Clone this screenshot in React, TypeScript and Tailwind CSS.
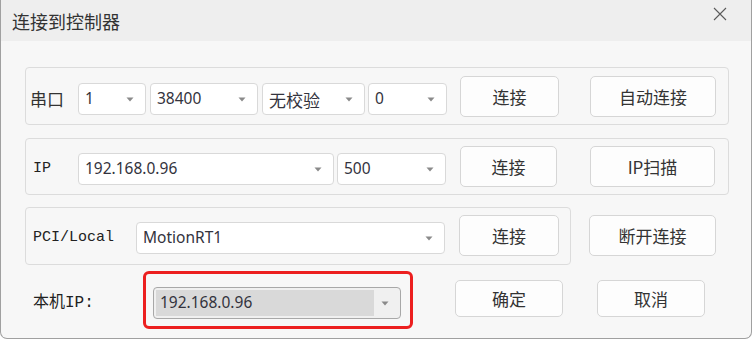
import React from "react";

const CJK = '"Noto Sans CJK SC", sans-serif';
const SANS = '"Noto Sans", "Noto Sans CJK SC", sans-serif';
const MONO = '"Liberation Mono", "Noto Sans CJK SC", monospace';

function Arrow() {
  return (
    <svg width="8" height="5" viewBox="0 0 8 5" className="shrink-0">
      <path d="M0.5 0.5 L7.5 0.5 L4 4.5 Z" fill="#8a8a8a" />
    </svg>
  );
}

function Combo({ text, w, cjk = false }: { text: string; w: string; cjk?: boolean }) {
  return (
    <div
      className={`${w} h-[32px] shrink-0 rounded-[4px] border border-[#d9d9d9] bg-white flex items-center justify-between pl-[6px] pr-[11px] text-[#33333d]`}
      style={{ fontFamily: cjk ? CJK : SANS }}
    >
      <span className={cjk ? "text-[17px] leading-none" : "text-[15.5px] leading-none"}>{text}</span>
      <Arrow />
    </div>
  );
}

function Btn({ text, w, h = "h-[41px]" }: { text: string; w: string; h?: string }) {
  return (
    <div
      className={`${w} ${h} shrink-0 rounded-[5px] border border-[#d6d6d6] bg-[#fdfdfd] flex items-center justify-center text-[17px] text-[#333333]`}
      style={{ fontFamily: CJK }}
    >
      {text}
    </div>
  );
}

export default function App() {
  return (
    <div className="w-[753px] h-[340px] bg-white">
      <div className="w-[752px] h-[339px] border-l border-r border-b border-[#a0a0a0] rounded-b-[7px] bg-[#f7f7f7] flex flex-col overflow-hidden">
        {/* Title bar */}
        <div className="h-[41px] shrink-0 bg-[#eeeeee] flex items-start justify-between pl-[11px] pr-[24px]">
          <span className="mt-[11px] text-[18px] leading-[20px] text-[#333333]" style={{ fontFamily: CJK }}>
            连接到控制器
          </span>
          <svg width="14" height="14" viewBox="0 0 14 14" className="mt-[7px]">
            <path d="M1 1 L13 13 M13 1 L1 13" stroke="#5a5a5a" strokeWidth="1.1" fill="none" />
          </svg>
        </div>

        {/* Body */}
        <div className="flex flex-col pl-[24px] pt-[26px]">
          {/* Group 1 */}
          <div className="w-[704px] h-[58px] rounded-[4px] border border-[#dcdcdc] bg-[#f7f7f7] flex items-start pl-[4px]">
            <div className="mt-[15px] h-[32px] w-[48px] flex items-center text-[17px] text-[#333333]" style={{ fontFamily: CJK }}>
              串口
            </div>
            <div className="mt-[15px] flex items-start">
              <Combo text="1" w="w-[68px]" />
              <div className="ml-[4px]"><Combo text="38400" w="w-[108px]" /></div>
              <div className="ml-[4px]"><Combo text="无校验" w="w-[103px]" cjk /></div>
              <div className="ml-[3px]"><Combo text="0" w="w-[79px]" /></div>
            </div>
            <div className="mt-[8px] ml-[13px]"><Btn text="连接" w="w-[99px]" /></div>
            <div className="mt-[8px] ml-[31px]"><Btn text="自动连接" w="w-[126px]" /></div>
          </div>

          {/* Group 2 */}
          <div className="mt-[13px] w-[704px] h-[57px] rounded-[4px] border border-[#dcdcdc] bg-[#f7f7f7] flex items-start pl-[7px]">
            <div className="mt-[14px] h-[32px] w-[45px] flex items-center text-[15px] text-[#222222]" style={{ fontFamily: MONO }}>
              IP
            </div>
            <div className="mt-[14px] flex items-start">
              <Combo text="192.168.0.96" w="w-[256px]" />
              <div className="ml-[3px]"><Combo text="500" w="w-[109px]" /></div>
            </div>
            <div className="mt-[7px] ml-[14px]"><Btn text="连接" w="w-[97px]" /></div>
            <div className="mt-[7px] ml-[33px]"><Btn text="IP扫描" w="w-[125px]" /></div>
          </div>

          {/* Row 3 */}
          <div className="mt-[12px] flex items-start">
            <div className="w-[546px] h-[58px] rounded-[4px] border border-[#dcdcdc] bg-[#f7f7f7] flex items-start pl-[7px]">
              <div className="mt-[14px] h-[32px] w-[103px] flex items-center text-[15px] text-[#222222]" style={{ fontFamily: MONO }}>
                PCI/Local
              </div>
              <div className="mt-[14px]"><Combo text="MotionRT1" w="w-[309px]" /></div>
              <div className="mt-[7px] ml-[14px]"><Btn text="连接" w="w-[100px]" /></div>
            </div>
            <div className="mt-[8px] ml-[18px]"><Btn text="断开连接" w="w-[127px]" /></div>
          </div>

          {/* Row 4 */}
          <div className="mt-[6px] flex items-start pl-[8px]">
            <div className="mt-[16px] h-[32px] w-[110px] flex items-center text-[16px] text-[#222222]" style={{ fontFamily: MONO }}>
              本机IP:
            </div>
            <div className="w-[270px] h-[58px] rounded-[6px] border-[3px] border-[#ec1f1f] pl-[7px] pt-[13px]">
              <div
                className="w-[248px] h-[32px] rounded-[4px] border border-[#a8a8a8] bg-[#f0f0f0] flex items-center pl-[2px] pr-[11px]"
                style={{ fontFamily: SANS }}
              >
                <div className="w-[218px] h-[26px] bg-[#d9d9d9] flex items-center pl-[4px] text-[15.5px] text-[#33333d]">
                  192.168.0.96
                </div>
                <div className="flex-1 flex justify-end">
                  <Arrow />
                </div>
              </div>
            </div>
            <div className="mt-[9px] ml-[42px]"><Btn text="确定" w="w-[108px]" h="h-[37px]" /></div>
            <div className="mt-[9px] ml-[34px]"><Btn text="取消" w="w-[108px]" h="h-[37px]" /></div>
          </div>
        </div>
      </div>
    </div>
  );
}
